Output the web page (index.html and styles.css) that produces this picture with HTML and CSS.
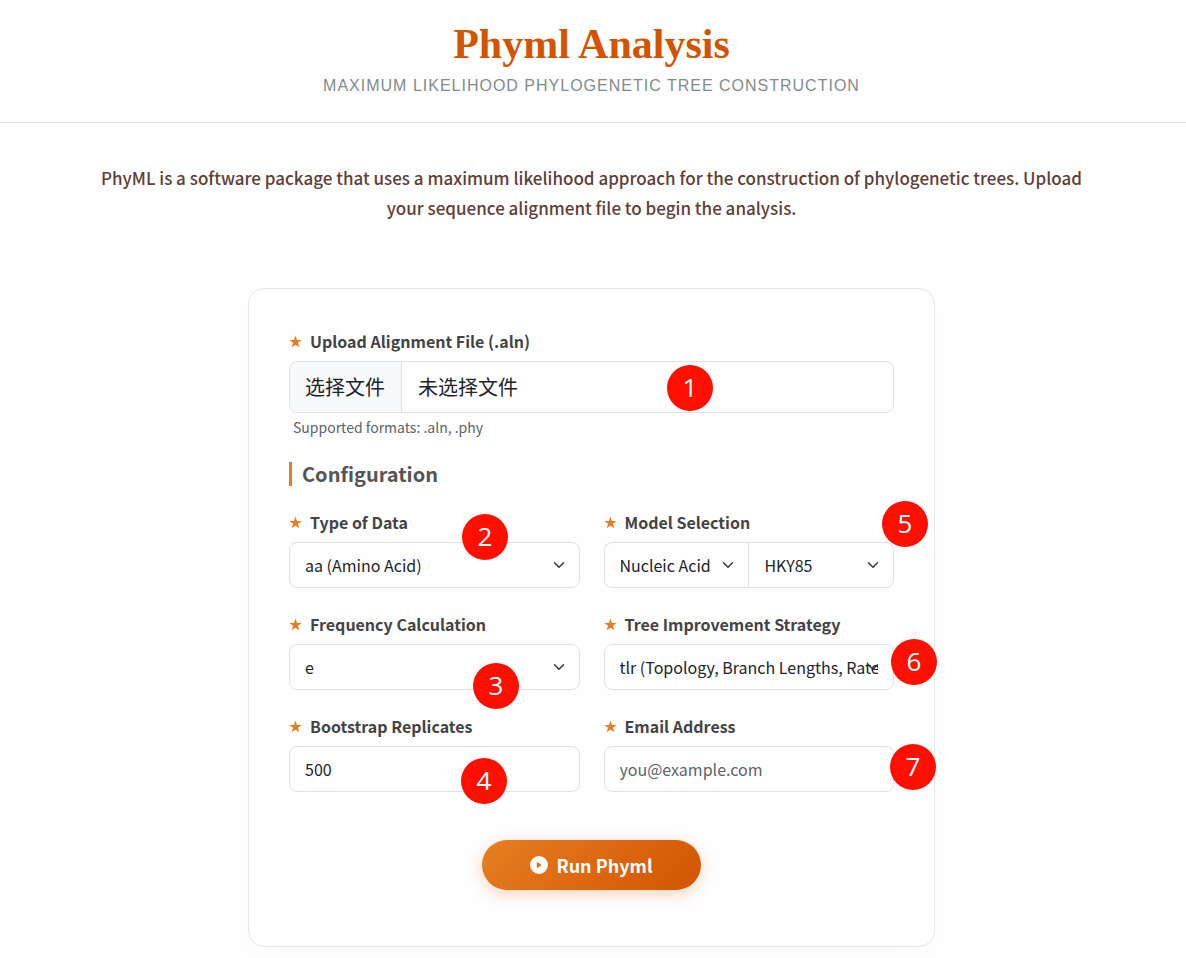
FILE: index.html
```html
<!DOCTYPE html>
<html lang="en">
<head>
    <meta charset="UTF-8">
    <meta name="viewport" content="width=device-width, initial-scale=1">
    <title>Phyml Analysis</title>
    <link rel="stylesheet" href="styles.css">
</head>
<body>
    <svg class="sprite" aria-hidden="true">
        <symbol id="star" viewBox="0 0 24 24">
            <path d="M12 1l2.800 8.200 8.700.1-7 5.200 2.600 8.300L12 17.800l-7.100 5 2.600-8.300-7-5.200 8.700-.1z"/>
        </symbol>
    </svg>

    <header class="page-header">
        <h1>Phyml Analysis</h1>
        <p class="subtitle">Maximum Likelihood Phylogenetic Tree Construction</p>
    </header>

    <main class="container">
        <p class="intro">PhyML is a software package that uses a maximum likelihood approach for the construction of phylogenetic trees. Upload your sequence alignment file to begin the analysis.</p>

        <form class="card">
            <div class="field">
                <label class="field-label" for="aln-file"><svg class="star"><use href="#star"/></svg>Upload Alignment File (.aln)</label>
                <input class="file-input" type="file" id="aln-file" accept=".aln,.phy">
                <label class="file-box" for="aln-file" lang="zh-CN">
                    <span class="file-button">选择文件</span>
                    <span class="file-name">未选择文件</span>
                </label>
                <span class="badge badge-1">1</span>
            </div>
            <p class="help">Supported formats: .aln, .phy</p>

            <h2>Configuration</h2>

            <div class="grid">
                <div class="field">
                    <label class="field-label" for="data-type"><svg class="star"><use href="#star"/></svg>Type of Data</label>
                    <select class="control" id="data-type">
                        <option>aa (Amino Acid)</option>
                        <option>nt (Nucleotide)</option>
                    </select>
                    <span class="badge badge-2">2</span>
                </div>

                <div class="field">
                    <label class="field-label" for="model-type"><svg class="star"><use href="#star"/></svg>Model Selection</label>
                    <div class="control-group">
                        <select class="control" id="model-type">
                            <option>Nucleic Acid</option>
                            <option>Amino Acid</option>
                        </select>
                        <select class="control" aria-label="Model">
                            <option>HKY85</option>
                            <option>JC69</option>
                            <option>GTR</option>
                        </select>
                    </div>
                    <span class="badge badge-5">5</span>
                </div>

                <div class="field">
                    <label class="field-label" for="frequency"><svg class="star"><use href="#star"/></svg>Frequency Calculation</label>
                    <select class="control" id="frequency">
                        <option>e</option>
                        <option>m</option>
                    </select>
                    <span class="badge badge-3">3</span>
                </div>

                <div class="field">
                    <label class="field-label" for="strategy"><svg class="star"><use href="#star"/></svg>Tree Improvement Strategy</label>
                    <select class="control control-long" id="strategy">
                        <option>tlr (Topology, Branch Lengths, Rate Parameters)</option>
                        <option>tl (Topology, Branch Lengths)</option>
                    </select>
                    <span class="badge badge-6">6</span>
                </div>

                <div class="field">
                    <label class="field-label" for="bootstrap"><svg class="star"><use href="#star"/></svg>Bootstrap Replicates</label>
                    <input class="control" type="text" inputmode="numeric" id="bootstrap" value="500">
                    <span class="badge badge-4">4</span>
                </div>

                <div class="field">
                    <label class="field-label" for="email"><svg class="star"><use href="#star"/></svg>Email Address</label>
                    <input class="control" type="email" id="email" placeholder="you@example.com">
                    <span class="badge badge-7">7</span>
                </div>
            </div>

            <div class="actions">
                <button class="run-btn" type="submit">
                    <svg class="play" viewBox="0 0 16 16"><path fill-rule="evenodd" d="M16 8A8 8 0 1 1 0 8a8 8 0 0 1 16 0zM6.800 5.500a.5.5 0 0 0-.8.4v4.200a.5.5 0 0 0 .8.4l3-2.100a.5.5 0 0 0 0-.8z"/></svg>
                    Run Phyml
                </button>
            </div>
        </form>
    </main>
</body>
</html>
```

FILE: styles.css
```css
* {
    box-sizing: border-box;
}
body {
    font-family: 'Noto Sans CJK SC', 'Noto Sans', sans-serif;
    font-size: 16px;
    line-height: 24px;
    margin: 0;
    color: #212529;
    background-color: #fefefe;
}
h1, h2, p {
    margin: 0;
}
.sprite {
    display: none;
}
.page-header {
    padding: 21px 27px 24px 24px;
    border-bottom: 1px solid #dee2e6;
    text-align: center;
}
h1 {
    font-family: Georgia, 'Liberation Serif', serif;
    font-size: 42px;
    line-height: 46px;
    font-weight: bold;
    color: #d35400;
}
.subtitle {
    margin-top: 7px;
    font-family: 'Liberation Sans', Arial, sans-serif;
    font-size: 16px;
    letter-spacing: 1px;
    text-transform: uppercase;
    color: #7f8c8d;
}
.container {
    padding: 40px 27px 11px 24px;
}
.intro {
    max-width: 992px;
    margin: 0 auto 65px;
    font-size: 17px;
    line-height: 30px;
    font-weight: 500;
    text-align: center;
    color: #5d4037;
}
.card {
    max-width: 687px;
    margin: 0 auto;
    padding: 40px 40px 56px;
    border: 1px solid #e9e4e4;
    border-radius: 16px;
    box-shadow: 0 10px 30px rgba(0,0,0,0.01);
}
.field {
    position: relative;
    min-width: 0;
}
.field-label {
    display: flex;
    align-items: center;
    margin-bottom: 8px;
    font-weight: bold;
    color: #444;
}
.star {
    width: 13px;
    height: 13px;
    margin-right: 8px;
    fill: #e67e22;
}
.file-input {
    position: absolute;
    opacity: 0;
    pointer-events: none;
}
.file-box {
    display: flex;
    height: 52px;
    border: 1px solid #dee2e6;
    border-radius: 8px;
    font-size: 20px;
    line-height: 50px;
    overflow: hidden;
    cursor: pointer;
}
.file-button {
    padding: 0 16px 0 15px;
    background-color: #f8f9fa;
    border-right: 1px solid #dee2e6;
}
.file-name {
    padding: 0 16px;
}
.help {
    margin-top: 3px;
    padding-left: 4px;
    font-size: 14px;
    line-height: 22px;
    color: #5c636a;
}
h2 {
    margin: 24px 0;
    padding-left: 10px;
    border-left: 3px solid #e67e22;
    font-size: 20px;
    line-height: 24px;
    font-weight: bold;
    color: #555;
}
.grid {
    display: grid;
    grid-template-columns: 1fr 1fr;
    gap: 24px;
}
.control {
    display: block;
    width: 100%;
    height: 46px;
    padding: 0 15px;
    border: 1px solid #dee2e6;
    border-radius: 8px;
    font: inherit;
    color: #212529;
    background-color: #fefefe;
}
.control::placeholder {
    color: #5c636a;
}
select.control {
    appearance: none;
    padding-right: 36px;
    background-image: url("data:image/svg+xml,%3Csvg xmlns='http://www.w3.org/2000/svg' viewBox='0 0 16 16'%3E%3Cpath fill='none' stroke='%23343a40' stroke-linecap='round' stroke-linejoin='round' stroke-width='2' d='m2 5 6 6 6-6'/%3E%3C/svg%3E");
    background-repeat: no-repeat;
    background-position: right 14px center;
    background-size: 12px 12px;
}
select.control-long {
    padding-right: 15px;
}
.control-group {
    display: flex;
}
.control-group .control:first-child {
    border-radius: 8px 0 0 8px;
    border-right: none;
}
.control-group .control:last-child {
    border-radius: 0 8px 8px 0;
}
.actions {
    margin-top: 48px;
    text-align: center;
}
.run-btn {
    display: inline-flex;
    align-items: center;
    height: 50px;
    padding: 0 48px 1px;
    border: none;
    border-radius: 50px;
    font: inherit;
    font-size: 18px;
    font-weight: bold;
    color: white;
    background: linear-gradient(135deg, #e67e22, #d35400);
    box-shadow: 0 4px 15px rgba(211,84,0,0.25);
    cursor: pointer;
}
.play {
    width: 18px;
    height: 18px;
    margin-right: 8px;
    fill: white;
}

/* numbered markers over the form */
.badge {
    position: absolute;
    width: 46px;
    height: 46px;
    border-radius: 50%;
    background-color: #ff0f00;
    color: white;
    font-family: 'Open Sans', sans-serif;
    font-size: 26px;
    line-height: 44px;
    text-align: center;
}
.badge-1 {
    top: 36px;
    left: 378px;
}
.badge-2 {
    top: 4px;
    left: 173px;
}
.badge-3 {
    top: 51px;
    left: 184px;
}
.badge-4 {
    top: 44px;
    left: 172px;
}
.badge-5 {
    top: -9px;
    right: -34px;
}
.badge-6 {
    top: 27px;
    right: -43px;
}
.badge-7 {
    top: 30px;
    right: -42px;
}

@media (max-width: 640px) {
    .grid {
        grid-template-columns: 1fr;
    }
}
```
